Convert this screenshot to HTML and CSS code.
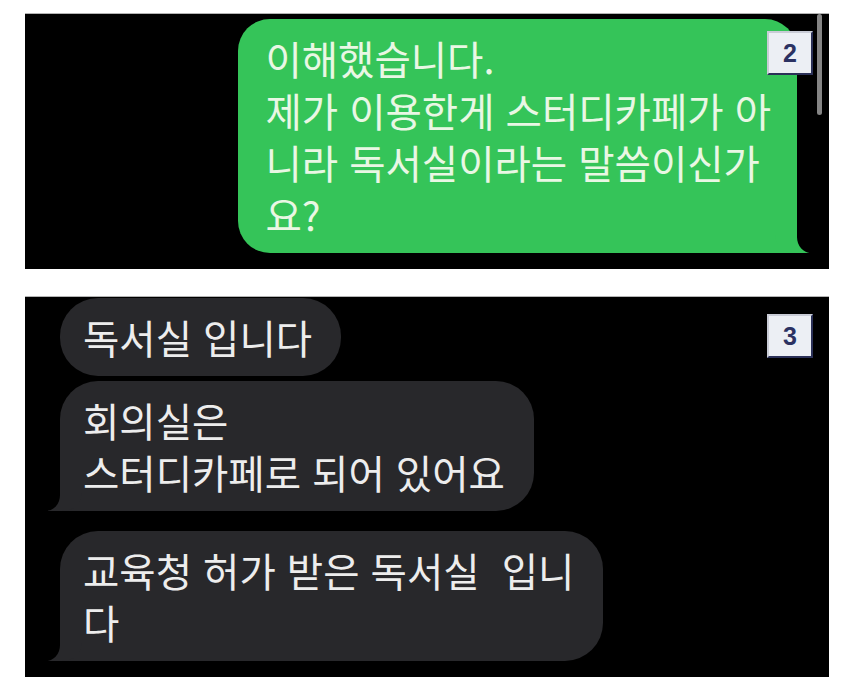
FILE: index.html
```html
<!DOCTYPE html>
<html lang="ko">
<head>
    <meta charset="UTF-8">
    <meta name="viewport" content="width=device-width, initial-scale=1.0">
    <title>독서실 문의</title>
    <link rel="stylesheet" href="styles.css">
</head>
<body>
    <div class="shot sent">
        <div class="scrollbar"></div>
        <div class="bubble green tail-right">
            <span class="line">이해했습니다.</span>
            <span class="line">제가 이용한게 스터디카페가 아</span>
            <span class="line">니라 독서실이라는 말씀이신가</span>
            <span class="line">요?</span>
        </div>
        <div class="badge">2</div>
    </div>

    <div class="shot received">
        <div class="bubble grey"><span class="line">독서실 입니다</span></div>
        <div class="bubble grey tail-left">
            <span class="line">회의실은</span>
            <span class="line">스터디카페로 되어 있어요</span>
        </div>
        <div class="bubble grey tail-left gap">
            <span class="line">교육청 허가 받은 독서실&nbsp; 입니</span>
            <span class="line">다</span>
        </div>
        <div class="badge">3</div>
    </div>
</body>
</html>
```

FILE: styles.css
```css
body {
    margin: 0;
    padding: 13px 0 0 25px;
    background: #ffffff;
    font-family: "Noto Sans CJK KR", "Noto Sans", sans-serif;
}
.shot {
    position: relative;
    width: 804px;
    background: #000000;
    border-top: 1px solid #b4b4b4;
    box-sizing: border-box;
    display: flex;
}
.sent {
    height: 256px;
    padding: 5px 32px 0 0;
    justify-content: flex-end;
    align-items: flex-start;
}
.received {
    height: 381px;
    margin-top: 27px;
    padding: 1px 0 0 35px;
    flex-direction: column;
    align-items: flex-start;
}
.bubble {
    position: relative;
    font-size: 39.5px;
    font-weight: 400;
    white-space: nowrap;
}
.line {
    display: block;
    height: 52px;
    line-height: 52px;
}
.green {
    background: #35c459;
    color: #e9f7e4;
    border-radius: 32px;
    padding: 13px 26px 13px 27px;
}
.grey {
    background: #28282b;
    color: #ededed;
    border-radius: 38px;
    margin-bottom: 5px;
    padding: 13px 29px 13px 23px;
}
.grey.gap {
    margin-top: 15px;
}

/* bubble tails */
.tail-left {
    border-bottom-left-radius: 0;
}
.tail-left::before {
    content: "";
    position: absolute;
    bottom: 0;
    left: -12px;
    width: 34px;
    height: 26px;
    background: #28282b;
    border-bottom-right-radius: 20px 18px;
}
.tail-left::after {
    content: "";
    position: absolute;
    bottom: 0;
    left: -14px;
    width: 14px;
    height: 28px;
    background: #000000;
    border-bottom-right-radius: 14px 16px;
}
.tail-right {
    border-bottom-right-radius: 0;
}
.tail-right::before {
    content: "";
    position: absolute;
    bottom: 0;
    right: -12px;
    width: 34px;
    height: 26px;
    background: #35c459;
    border-bottom-left-radius: 20px 18px;
}
.tail-right::after {
    content: "";
    position: absolute;
    bottom: 0;
    right: -14px;
    width: 14px;
    height: 28px;
    background: #000000;
    border-bottom-left-radius: 14px 16px;
}

.badge {
    position: absolute;
    top: 17px;
    right: 16px;
    width: 46px;
    height: 44px;
    box-sizing: border-box;
    background: #eceff4;
    border: 2px solid #2b3158;
    border-top-color: #c9ccd6;
    border-left-color: #c9ccd6;
    color: #2b3262;
    font-family: "Liberation Sans Narrow", "Liberation Sans", Arial, sans-serif;
    font-weight: bold;
    font-size: 25px;
    line-height: 40px;
    text-align: center;
}
.scrollbar {
    position: absolute;
    top: 0;
    right: 7px;
    width: 5px;
    height: 101px;
    border-radius: 3px;
    background: #858585;
}
```
